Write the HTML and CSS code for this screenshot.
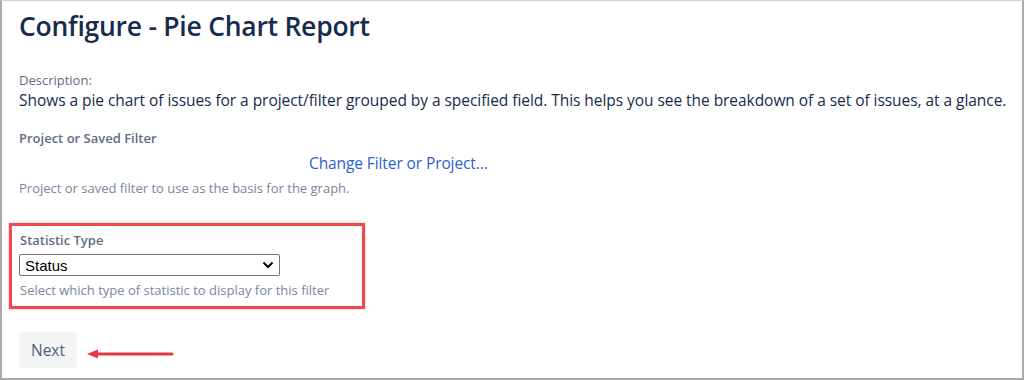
FILE: index.html
```html
<!DOCTYPE html>
<html>
<head>
<meta charset="utf-8">
<link rel="stylesheet" href="styles.css">
</head>
<body>
<div class="frame">
  <h1 class="title">Configure - Pie Chart Report</h1>
  <div class="field desc">
    <div class="label">Description:</div>
    <div class="desc-text">Shows a pie chart of issues for a project/filter grouped by a specified field. This helps you see the breakdown of a set of issues, at a glance.</div>
  </div>
  <div class="field project">
    <div class="label">Project or Saved Filter</div>
    <div class="link-row"><a class="link" href="#">Change Filter or Project...</a></div>
    <div class="help">Project or saved filter to use as the basis for the graph.</div>
  </div>
  <div class="highlight">
    <div class="label">Statistic Type</div>
    <div class="select">
      <span class="select-value">Status</span>
      <svg class="chev" width="12" height="8" viewBox="0 0 12 8"><path d="M1.5 1.5 L6 6 L10.5 1.5" fill="none" stroke="#000" stroke-width="2"/></svg>
    </div>
    <div class="help">Select which type of statistic to display for this filter</div>
  </div>
  <div class="actions">
    <button class="btn">Next</button>
    <svg class="arrow" width="90" height="12" viewBox="0 0 90 12"><path d="M12 6 H86" stroke="#e8383f" stroke-width="3" stroke-linecap="round"/><path d="M1 6 L12 1.5 L12 10.5 Z" fill="#e8383f"/></svg>
  </div>
</div>
</body>
</html>
```
FILE: styles.css
```css
html, body { margin: 0; padding: 0; background: #fff; }
body { font-family: "Open Sans", "Noto Sans", sans-serif; }
.frame {
  box-sizing: border-box;
  width: 1024px;
  height: 380px;
  border: 2px solid #a9a9a9;
  border-top: 1px solid #d0d0d0;
  padding: 0 0 0 17px;
  overflow: hidden;
}
.title {
  margin: 6px 0 0 0;
  font-size: 26.5px;
  font-weight: 600;
  line-height: 38px;
  color: #172b4d;
  letter-spacing: -0.25px;
}
.label {
  font-size: 13px;
  font-weight: 600;
  color: #5e6c84;
  line-height: 18px;
}
.desc { margin-top: 26px; }
.desc .label { font-weight: 400; }
.desc-text {
  font-size: 15.5px;
  color: #172b4d;
  line-height: 22px;
  letter-spacing: -0.05px;
}
.project { margin-top: 18px; }
.link-row { padding-left: 290px; margin-top: 5px; line-height: 22px; }
.link {
  font-size: 15.5px;
  color: #2d5fd0;
  text-decoration: none;
  letter-spacing: -0.1px;
}
.help {
  font-size: 13px;
  color: #7a869a;
  line-height: 18px;
  margin-top: 5px;
}
.highlight {
  box-sizing: border-box;
  width: 356px;
  height: 86px;
  margin: 26px 0 0 -10px;
  border: 3px solid #ef4a52;
  box-shadow: 0 0 2px rgba(239,74,82,0.5);
  padding: 5px 0 0 8px;
}
.select {
  box-sizing: border-box;
  width: 261px;
  height: 22px;
  margin-top: 5px;
  margin-left: -1px;
  border: 1px solid #767676;
  border-radius: 2px;
  display: flex;
  align-items: center;
  justify-content: space-between;
  padding: 0 5px 0 5px;
  font-family: "Liberation Sans", Arial, sans-serif;
  font-size: 15px;
  color: #000;
}
.chev { display: block; }
.highlight .help { margin-top: 5px; }
.actions {
  display: flex;
  align-items: center;
  margin-top: 23px;
  gap: 9px;
}
.btn {
  width: 58px;
  height: 36px;
  border: none;
  border-radius: 3px;
  background: #f4f5f7;
  color: #505f79;
  font-family: "Open Sans", "Noto Sans", sans-serif;
  font-size: 15.5px;
  padding: 0;
}
.arrow { display: block; margin-top: 8px; }
```
